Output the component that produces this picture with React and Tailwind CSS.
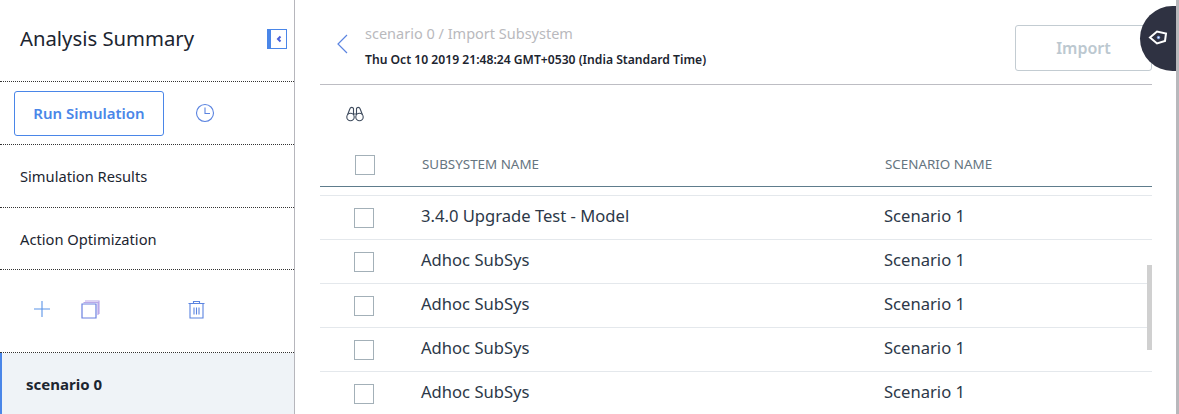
const rows = ["3.4.0 Upgrade Test - Model", "Adhoc SubSys", "Adhoc SubSys", "Adhoc SubSys", "Adhoc SubSys"];

function Check() {
  return <span className="block h-5 w-5 border border-[#a3b0b8] bg-white" />;
}

function Sidebar() {
  return (
    <aside className="flex h-[414px] w-[295px] shrink-0 flex-col border-r border-[#b6b6bc]">
      <div className="flex h-[82px] shrink-0 items-center justify-between border-b border-dotted border-[#333] pb-1 pl-5 pr-[7px]">
        <h1 className="text-[20.3px] text-[#1c2530]">Analysis Summary</h1>
        <span className="flex h-5 w-5 items-center justify-center border border-l-[4px] border-[#4a86e8]">
          <svg width="8" height="8" viewBox="0 0 8 8" fill="none" stroke="#4a5fd8" strokeWidth="2">
            <path d="M5.5 1.5 3 4l2.5 2.5" />
          </svg>
        </span>
      </div>
      <div className="flex h-[63px] shrink-0 items-center border-b border-dotted border-[#333] pl-[14px]">
        <button className="h-[45px] w-[150px] rounded-[3px] border border-[#4a86e8] text-[15px] font-semibold text-[#4a86e8]">
          Run Simulation
        </button>
        <svg className="ml-[31px]" width="20" height="20" viewBox="0 0 20 20" fill="none" stroke="#5b84e0" strokeWidth="1.1">
          <circle cx="10" cy="10" r="8.5" />
          <path d="M10 4.5V10.5H15" />
        </svg>
      </div>
      <div className="flex h-[63px] shrink-0 items-center border-b border-dotted border-[#333] pl-5 text-[14.7px] text-[#1c2530]">
        Simulation Results
      </div>
      <div className="flex h-[62px] shrink-0 items-center border-b border-dotted border-[#333] pl-5 pt-px text-[14.7px] text-[#1c2530]">
        Action Optimization
      </div>
      <div className="flex h-[83px] shrink-0 items-center border-b border-dotted border-[#333] pb-1 pl-[33px]">
        <svg width="18" height="18" viewBox="0 0 18 18" stroke="#5b94e8" strokeWidth="1.1">
          <path d="M9 1v16M1 9h16" />
        </svg>
        <svg className="ml-[30px]" width="19" height="19" viewBox="0 0 19 19" fill="none" stroke="#6a80e0" strokeWidth="1.2">
          <path d="M1 4h14v14H1z" />
          <path d="M2.500 2.500H17V15M4 1h14v13" stroke="#b9a8e8" />
        </svg>
        <svg className="ml-[88px]" width="17" height="19" viewBox="0 0 17 19" fill="none" stroke="#5b84e0" strokeWidth="1.1">
          <path d="M0.500 3.500h16M2 4v14h13V4M5.500 3.500V1.500h6v2M6 7.500v7M8.500 7.500v7M11 7.500v7" />
        </svg>
      </div>
      <div className="flex flex-1 items-center border-l-2 border-[#4a86e8] bg-[#eff3f7] pl-[24px] pt-[2px] text-[15px] font-bold text-[#1c2530]">
        scenario 0
      </div>
    </aside>
  );
}

function Main() {
  return (
    <main className="relative flex min-w-0 flex-1 flex-col pl-[25px] pr-[24px]">
      <header className="flex h-[85px] shrink-0 items-start border-b border-[#bdbdc3]">
        <svg className="ml-[15px] mt-[33px]" width="14" height="22" viewBox="0 0 14 22" fill="none" stroke="#5b84e0" strokeWidth="1.2">
          <path d="M12 2 3 11l9 9" />
        </svg>
        <div className="ml-[16px] flex-1 pt-[23px]">
          <div className="text-[14.5px] leading-5 text-[#b9b9bd]">scenario 0 / Import Subsystem</div>
          <div className="mt-[9px] text-[12.15px] font-semibold leading-4 text-[#1c2530]">
            Thu Oct 10 2019 21:48:24 GMT+0530 (India Standard Time)
          </div>
        </div>
        <button className="mt-[25px] h-[46px] w-[137px] rounded-[3px] border border-[#c3ccd2] text-[16px] font-semibold text-[#bcc8d0]">
          Import
        </button>
      </header>
      <div className="flex h-[58px] shrink-0 items-center pl-[26px]">
        <svg width="18" height="16" viewBox="0 0 18 16" fill="none" stroke="#3d4a5c" strokeWidth="1.1">
          <circle cx="4.500" cy="11" r="3.700" />
          <circle cx="13.500" cy="11" r="3.700" />
          <path d="M1.500 9 4 2.500C4.500 1 7 1 7.500 2.500V9M16.500 9 14 2.500C13.500 1 11 1 10.500 2.500V9M7.500 8h3" />
        </svg>
      </div>
      <div className="flex h-[44px] shrink-0 items-center border-b border-[#5e7c8c] text-[13.4px] text-[#66757f]">
        <div className="w-[102px] pl-[35px]"><Check /></div>
        <div className="w-[463px]">SUBSYSTEM NAME</div>
        <div>SCENARIO NAME</div>
      </div>
      <div className="relative mt-[8px] shrink-0 border-t border-[#e4e8ec]">
        {rows.map((name, i) => (
          <div key={i} className="flex h-[44px] items-center border-b border-[#e4e8ec] text-[16.6px] text-[#2c3848]">
            <div className="w-[101px] pl-[34px]"><Check /></div>
            <div className="w-[463px] pb-[2px]">{name}</div>
            <div className="pb-[2px]">Scenario 1</div>
          </div>
        ))}
        <div className="absolute right-0 top-[69px] h-[85px] w-[5px] bg-[#d0d0d0]" />
      </div>
    </main>
  );
}

export default function App() {
  return (
    <div className="relative flex h-[414px] w-[1179px] overflow-hidden border-r-[3px] border-[#b8b8bc] bg-white font-['Noto_Sans',sans-serif]">
      <Sidebar />
      <Main />
      <div className="absolute right-0 top-[6px] flex h-[65px] w-[36px] items-center rounded-l-full bg-[#2f3242] pl-[8px]">
        <svg className="-mt-[2px]" width="20" height="15" viewBox="0 0 20 15" fill="none" stroke="#fff" strokeWidth="2">
          <path d="M2 7.500 9 1.500l9 2-1 7.500-8 2.500z" />
          <circle cx="10.500" cy="7.500" r="1.200" fill="#fff" stroke="#7aa2f0" strokeWidth="1" />
        </svg>
      </div>
    </div>
  );
}
